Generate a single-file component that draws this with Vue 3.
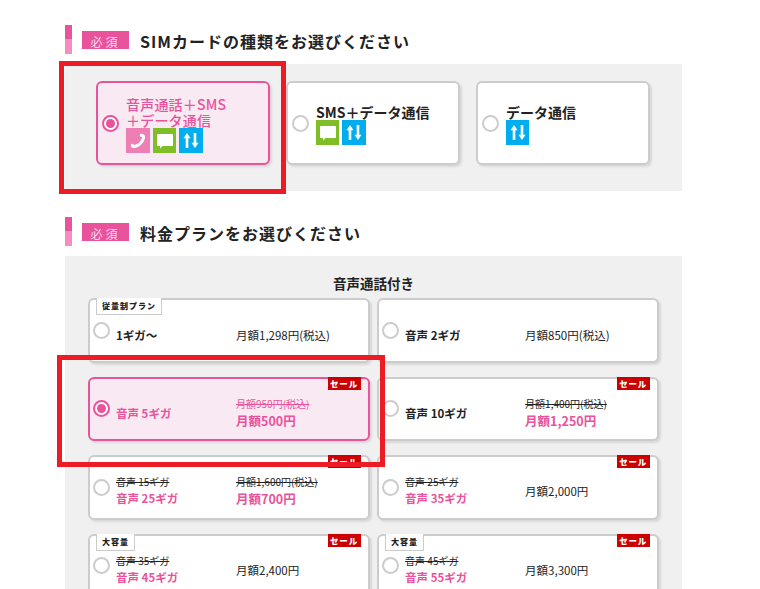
<script setup>
const simTypes = [
  { label: ["音声通話＋SMS", "＋データ通信"], icons: ["tel", "sms", "data"], active: true },
  { label: ["SMS＋データ通信"], icons: ["sms", "data"] },
  { label: ["データ通信"], icons: ["data"] },
];

const plans = [
  { name: "1ギガ〜", price: "月額1,298円(税込)", tag: "従量制プラン" },
  { name: "音声 2ギガ", price: "月額850円(税込)" },
  { name: "音声 5ギガ", oldPrice: "月額950円(税込)", salePrice: "月額500円", sale: true, active: true },
  { name: "音声 10ギガ", oldPrice: "月額1,400円(税込)", salePrice: "月額1,250円", sale: true },
  { oldName: "音声 15ギガ", saleName: "音声 25ギガ", oldPrice: "月額1,600円(税込)", salePrice: "月額700円", sale: true },
  { oldName: "音声 25ギガ", saleName: "音声 35ギガ", price: "月額2,000円", sale: true },
  { oldName: "音声 35ギガ", saleName: "音声 45ギガ", price: "月額2,400円", sale: true, tag: "大容量" },
  { oldName: "音声 45ギガ", saleName: "音声 55ギガ", price: "月額3,300円", sale: true, tag: "大容量" },
];
</script>

<template>
  <div class="page">
    <section class="block">
      <h2 class="heading">
        <span class="bar"></span>
        <span class="required">必須</span>
        <span class="heading-text">SIMカードの種類をお選びください</span>
      </h2>
      <div class="panel sim-panel">
        <div v-for="(sim, i) in simTypes" :key="i" class="card sim-card" :class="{ active: sim.active }">
          <span class="radio"></span>
          <div class="sim-body">
            <div class="sim-label">
              <div v-for="line in sim.label" :key="line">{{ line }}</div>
            </div>
            <div class="sim-icons">
              <template v-for="icon in sim.icons" :key="icon">
                <span v-if="icon === 'tel'" class="icon tel">
                  <svg viewBox="0 0 24 24" width="24" height="25">
                    <path d="M15.200 6.800C17.800 7 17.800 8.300 17.500 9.500 16.300 13.700 12.500 17.300 8.500 18 7.300 18.200 6.300 17.800 6.300 16.800" fill="none" stroke="#fff" stroke-width="3" stroke-linecap="round" />
                  </svg>
                </span>
                <span v-else-if="icon === 'sms'" class="icon sms">
                  <svg viewBox="0 0 24 24" width="24" height="25">
                    <path d="M5 5.500h14c.6 0 1 .4 1 1v10c0 .6-.4 1-1 1h-9.500l-2.500 2.500v-2.500h-2c-.6 0-1-.4-1-1v-10c0-.6.400-1 1-1z" fill="#fff" />
                  </svg>
                </span>
                <span v-else class="icon data">
                  <svg viewBox="0 0 24 24" width="24" height="25">
                    <path d="M8 4.500l3.500 5.300h-2.200v9.700h-2.600v-9.700h-2.200z M16 19.500l-3.500-5.300h2.200v-9.700h2.600v9.700h2.200z" fill="#fff" />
                  </svg>
                </span>
              </template>
            </div>
          </div>
        </div>
        <div class="marker marker-sim"></div>
      </div>
    </section>

    <section class="block plan-block">
      <h2 class="heading">
        <span class="bar"></span>
        <span class="required">必須</span>
        <span class="heading-text">料金プランをお選びください</span>
      </h2>
      <div class="panel plan-panel">
        <h3 class="plan-title">音声通話付き</h3>
        <div class="plan-grid">
          <div v-for="(plan, i) in plans" :key="i" class="card plan-card" :class="{ active: plan.active }">
            <span v-if="plan.tag" class="tag">{{ plan.tag }}</span>
            <span v-if="plan.sale" class="sale">セール</span>
            <span class="radio"></span>
            <div class="plan-name">
              <div v-if="plan.oldName" class="old">{{ plan.oldName }}</div>
              <div v-if="plan.saleName" class="pink">{{ plan.saleName }}</div>
              <div v-if="plan.name" class="single">{{ plan.name }}</div>
            </div>
            <div class="plan-price">
              <div v-if="plan.price" class="single">{{ plan.price }}</div>
              <div v-if="plan.oldPrice" class="old">{{ plan.oldPrice }}</div>
              <div v-if="plan.salePrice" class="pink">{{ plan.salePrice }}</div>
            </div>
          </div>
        </div>
        <div class="marker marker-plan"></div>
      </div>
    </section>
  </div>
</template>

<style scoped>
.page {
  height: 589px;
  overflow: hidden;
  padding: 25px 78px 0 65px;
  font-family: "Noto Sans CJK JP", "Noto Sans", sans-serif;
  color: #222;
  box-sizing: border-box;
}
.plan-block {
  margin-top: 26px;
}
.heading {
  display: flex;
  align-items: center;
  height: 29px;
  margin: 0 0 10px;
  font-size: 16px;
  font-weight: 700;
}
.bar {
  width: 7px;
  height: 29px;
  background: linear-gradient(#e9539b 50%, #f58cc4 50%);
}
.required {
  width: 47px;
  height: 18px;
  margin: 0 11px 0 10px;
  background: #e9539b;
  color: #fbdcec;
  font-size: 12px;
  font-weight: 400;
  line-height: 22px;
  letter-spacing: 3px;
  text-align: center;
}
.heading-text {
  padding-top: 2px;
  letter-spacing: 1px;
}
.panel {
  position: relative;
  background: #f0f0f0;
}
.sim-panel {
  display: flex;
  gap: 15.700px;
  height: 127px;
  padding: 17px 0 0 31px;
  box-sizing: border-box;
}
.card {
  position: relative;
  display: flex;
  align-items: center;
  box-sizing: border-box;
  background: #fff;
  border: 2px solid #ccc;
  border-radius: 6px;
  box-shadow: 2px 2px 2px #d8d8d8;
}
.card.active {
  background: #f9e9f2;
  border-color: #e9539b;
  color: #e9539b;
}
.sim-card {
  width: 174.300px;
  height: 84px;
  padding-left: 4px;
  font-size: 14px;
  font-weight: 700;
}
.radio {
  position: relative;
  flex: none;
  width: 17px;
  height: 17px;
  box-sizing: border-box;
  background: #fff;
  border: 2px solid #ccc;
  border-radius: 50%;
}
.active .radio {
  border-color: #e9539b;
}
.active .radio::after {
  content: "";
  position: absolute;
  inset: 2px;
  background: #e9539b;
  border-radius: 50%;
}
.sim-body {
  margin-left: 7px;
  padding-top: 2px;
}
.sim-label {
  line-height: 16px;
}
.active .sim-label {
  font-weight: 500;
  letter-spacing: 0.2px;
}
.sim-icons {
  display: flex;
  gap: 3px;
}
.icon {
  display: block;
  width: 23.500px;
  height: 25px;
}
.icon svg {
  display: block;
}
.tel {
  background: #ee7fb5;
}
.sms {
  background: #7fbe26;
}
.data {
  background: #00aeef;
}
.plan-panel {
  height: 340px;
  padding: 18px 23px 0;
  box-sizing: border-box;
}
.plan-title {
  margin: 0 0 6px;
  font-size: 13.500px;
  font-weight: 700;
  line-height: 18px;
  text-align: center;
}
.plan-grid {
  display: grid;
  grid-template-columns: 281.500px 281.500px;
  grid-auto-rows: 64.700px;
  gap: 14px 7.600px;
}
.plan-card {
  padding-left: 3px;
  font-size: 11.500px;
}
.plan-card:nth-child(-n+2) {
  padding-top: 2px;
}
.plan-card .radio {
  margin-top: -1px;
}
.plan-name {
  width: 120px;
  margin-left: 6px;
  padding-top: 5px;
  font-weight: 700;
  line-height: 17px;
}
.plan-price {
  padding-top: 5px;
  line-height: 17px;
}
.single {
  padding-top: 3px;
}
.plan-price .pink {
  font-size: 12.500px;
  font-weight: 700;
}
.old {
  font-size: 10px;
  font-weight: 400;
  text-decoration: line-through;
}
.pink {
  color: #e9539b;
}
.tag {
  position: absolute;
  top: -2px;
  left: 6px;
  height: 17px;
  padding: 0 5px;
  box-sizing: border-box;
  background: #fff;
  border: 1px solid #ccc;
  border-top: 0;
  color: #222;
  font-size: 8px;
  font-weight: 900;
  line-height: 15px;
  letter-spacing: 1px;
}
.sale {
  position: absolute;
  top: -2px;
  right: 7px;
  width: 33px;
  height: 13px;
  background: #c00;
  color: #fff;
  font-size: 8.500px;
  font-weight: 900;
  line-height: 13px;
  letter-spacing: 0.8px;
  text-align: center;
}
.marker {
  position: absolute;
  box-sizing: border-box;
  border: 5px solid #ed1c24;
}
.marker-sim {
  top: -3px;
  left: -6px;
  width: 227px;
  height: 133px;
}
.marker-plan {
  top: 99px;
  left: -8px;
  width: 328px;
  height: 112px;
}
</style>
